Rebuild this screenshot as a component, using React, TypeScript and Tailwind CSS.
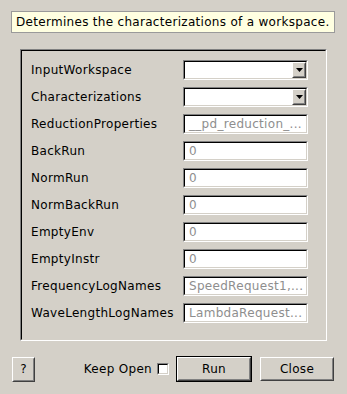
const rows: { label: string; kind: "combo" | "text"; value?: string }[] = [
  { label: "InputWorkspace", kind: "combo" },
  { label: "Characterizations", kind: "combo" },
  { label: "ReductionProperties", kind: "text", value: "__pd_reduction_..." },
  { label: "BackRun", kind: "text", value: "0" },
  { label: "NormRun", kind: "text", value: "0" },
  { label: "NormBackRun", kind: "text", value: "0" },
  { label: "EmptyEnv", kind: "text", value: "0" },
  { label: "EmptyInstr", kind: "text", value: "0" },
  { label: "FrequencyLogNames", kind: "text", value: "SpeedRequest1,..." },
  { label: "WaveLengthLogNames", kind: "text", value: "LambdaRequest..." },
];

function Sunken({ children, className = "" }: { children?: React.ReactNode; className?: string }) {
  return (
    <div className={`border border-t-[#808080] border-l-[#808080] border-b-white border-r-white ${className}`}>
      <div className="flex h-full w-full border border-t-black border-l-black border-b-[#d4d0c8] border-r-[#d4d0c8] bg-white">
        {children}
      </div>
    </div>
  );
}

function Raised({ children, className = "" }: { children?: React.ReactNode; className?: string }) {
  return (
    <div className={`border border-t-white border-l-white border-b-[#404040] border-r-[#404040] bg-[#d4d0c8] ${className}`}>
      <div className="flex h-full w-full items-center justify-center border border-t-[#d4d0c8] border-l-[#d4d0c8] border-b-[#808080] border-r-[#808080]">
        {children}
      </div>
    </div>
  );
}

function Combo() {
  return (
    <Sunken className="h-[20px] w-[125px]">
      <div className="flex-1" />
      <Raised className="h-full w-[14px]">
        <svg width="7" height="4" viewBox="0 0 7 4">
          <path d="M0 0h7L3.5 4z" fill="#000" />
        </svg>
      </Raised>
    </Sunken>
  );
}

function TextField({ value }: { value?: string }) {
  return (
    <Sunken className="h-[20px] w-[125px]">
      <span className="overflow-hidden whitespace-nowrap pl-[4px] leading-[16px] text-[#8e8e8e]">{value}</span>
    </Sunken>
  );
}

export default function App() {
  return (
    <div className="flex h-[394px] w-[347px] flex-col bg-[#d4d0c8] font-['DejaVu_Sans',sans-serif] text-[12px] tracking-[0.3px] text-black">
      <div className="ml-[11px] mt-[11px] h-[22px] w-[324px] whitespace-nowrap border border-[#9a9a9a] bg-[#ffffe1] pl-[4px] leading-[20px]">
        Determines the characterizations of a workspace.
      </div>

      <div className="ml-[20px] mt-[16px] h-[292px] w-[307px] border border-t-[#808080] border-l-[#808080] border-b-white border-r-white">
        <div className="flex h-full w-full flex-col gap-[7px] border border-t-black border-l-black border-b-[#d4d0c8] border-r-[#d4d0c8] pl-[9px] pt-[9px]">
          {rows.map((row) => (
            <div key={row.label} className="flex h-[20px] items-center">
              <span className="w-[152px] whitespace-nowrap">{row.label}</span>
              {row.kind === "combo" ? <Combo /> : <TextField value={row.value} />}
            </div>
          ))}
        </div>
      </div>

      <div className="mt-[15px] flex h-[26px] items-center pl-[12px] pr-[13px]">
        <Raised className="h-[25px] w-[23px]">?</Raised>
        <div className="flex-1" />
        <span>Keep Open</span>
        <Sunken className="ml-[5px] h-[12px] w-[12px]" />
        <div className="ml-[7px] h-[26px] w-[76px] border border-black">
          <Raised className="h-full w-full">Run</Raised>
        </div>
        <Raised className="ml-[8px] h-[24px] w-[74px]">Close</Raised>
      </div>
    </div>
  );
}
